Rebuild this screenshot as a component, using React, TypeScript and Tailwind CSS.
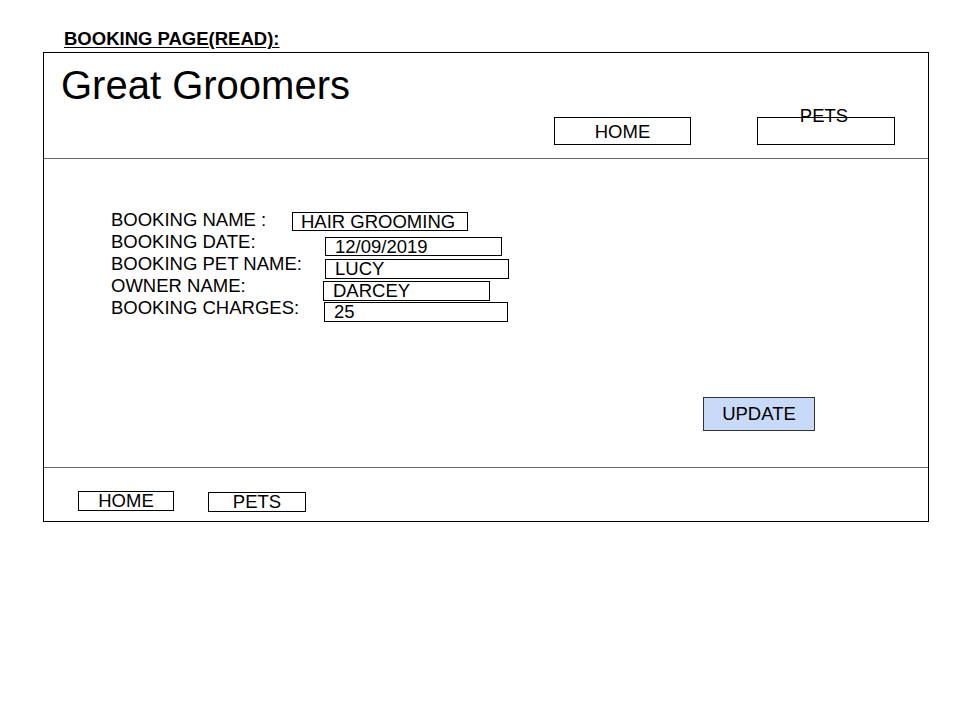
const FIELDS = [
  { label: 'BOOKING NAME :', value: 'HAIR GROOMING', labelW: 'w-[181px]', box: 'mt-[3px] w-[176px] h-[19px] pl-[8px]' },
  { label: 'BOOKING DATE:', value: '12/09/2019', labelW: 'w-[214px]', box: 'mt-[6px] w-[177px] h-[19px] pl-[9px]' },
  { label: 'BOOKING PET NAME:', value: 'LUCY', labelW: 'w-[214px]', box: 'mt-[6px] w-[184px] h-[20px] pl-[9px]' },
  { label: 'OWNER NAME:', value: 'DARCEY', labelW: 'w-[212px]', box: 'mt-[6px] w-[167px] h-[20px] pl-[9px]' },
  { label: 'BOOKING CHARGES:', value: '25', labelW: 'w-[213px]', box: 'mt-[5px] w-[184px] h-[20px] pl-[9px]' },
]

export default function App() {
  return (
    <div className="w-[960px] h-[720px] bg-white text-black font-['Liberation_Sans',Arial,sans-serif] pt-[29px]">
      {/* page caption */}
      <div className="ml-[64px] text-[18.5px] leading-[20px] font-bold underline underline-offset-[2px]">
        BOOKING PAGE(READ):
      </div>

      <div className="ml-[43px] mt-[3px] w-[886px] h-[470px] border border-black flex flex-col">
        {/* ── Header ───────────────────────── */}
        <div className="h-[106px] border-b border-[#666] flex flex-col">
          <div className="pl-[17px] pt-[9px] text-[40px] leading-[46px]">Great Groomers</div>
          <div className="mt-[9px] ml-[510px] flex text-[18.5px]">
            <div className="w-[137px] h-[28px] border border-black text-center leading-[27px]">HOME</div>
            <div className="relative ml-[66px] w-[138px] h-[28px] border border-black">
              <span className="absolute left-0 right-[4px] -top-[12px] text-center leading-[20px]">PETS</span>
            </div>
          </div>
        </div>

        {/* ── Booking details ──────────────── */}
        <div className="h-[309px] border-b border-[#666] pt-[50px] pl-[67px] flex flex-col text-[18.5px]">
          {FIELDS.map((f) => (
            <div key={f.label} className="h-[22px] flex items-start">
              <div className={`${f.labelW} leading-[22px] whitespace-nowrap`}>{f.label}</div>
              <div className={`${f.box} border border-black leading-[18px] whitespace-nowrap`}>{f.value}</div>
            </div>
          ))}
          <div className="mt-[78px] ml-[592px] w-[112px] h-[34px] border border-[#333] bg-[#c9daf8] text-center leading-[32px]">
            UPDATE
          </div>
        </div>

        {/* ── Footer ───────────────────────── */}
        <div className="flex-1 pl-[34px] pt-[23px] flex items-start text-[18.5px]">
          <div className="w-[96px] h-[20px] border border-black text-center leading-[18px]">HOME</div>
          <div className="ml-[34px] mt-[1px] w-[98px] h-[20px] border border-black text-center leading-[18px]">PETS</div>
        </div>
      </div>
    </div>
  )
}
